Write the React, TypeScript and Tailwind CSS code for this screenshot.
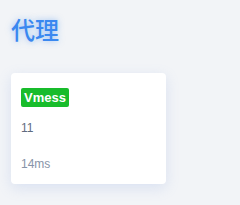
export default function App() {
  return (
    <div className="w-[240px] h-[205px] bg-[#f2f4f7] overflow-hidden font-['Liberation_Sans',sans-serif]">
      <div className="pt-[13px] pl-[11px]">
        <h1 className="text-[24px] leading-[32px] text-[#3a88f0] font-medium font-['Noto_Sans_CJK_SC',sans-serif] [text-shadow:0_0_6px_rgba(61,139,242,0.5)]">代理</h1>
      </div>
      <div className="mt-[28px] ml-[11px] w-[155px] h-[111px] bg-white rounded-[4px] shadow-[0_4px_14px_rgba(120,150,220,0.2)] pt-[15px] pl-[10px] flex flex-col items-start">
        <span className="h-[19px] px-[3px] bg-[#18bc2b] text-white text-[13px] font-bold leading-[19px] rounded-[2px]">Vmess</span>
        <div className="mt-[13px] text-[12px] leading-[16px] text-[#5f6b80]">11</div>
        <div className="mt-[20px] text-[12px] leading-[16px] text-[#8794a8]">14ms</div>
      </div>
    </div>
  );
}
